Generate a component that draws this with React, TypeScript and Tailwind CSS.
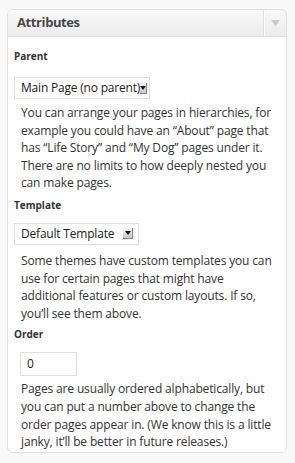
import React from 'react';

function SelectBox({ label, width }: { label: string; width: string }) {
  return (
    <div className={`flex items-center justify-between h-[22px] ${width} bg-white border border-[#dfdfdf] pl-[6px] pr-[5px]`}>
      <span className="text-[12px] tracking-[-0.2px] text-[#222] leading-none whitespace-nowrap">{label}</span>
      <span className="flex items-center justify-center w-[10px] h-[11px] bg-gradient-to-b from-[#f4f4f4] to-[#c9c9c9] border-r border-b border-[#888]">
        <svg width="6" height="4" viewBox="0 0 6 4">
          <path d="M0 0 L6 0 L3 4 Z" fill="#111" />
        </svg>
      </span>
    </div>
  );
}

function Help({ children, top }: { children: React.ReactNode; top: string }) {
  return <p className={`${top} pl-[7px] text-[12px] tracking-[-0.15px] leading-[17.6px] text-[#333]`}>{children}</p>;
}

function Label({ text, top }: { text: string; top: string }) {
  return <p className={`${top} text-[10px] leading-[14px] font-bold text-[#333]`}>{text}</p>;
}

export default function App() {
  return (
    <div className="w-[295px] h-[463px] bg-[#f9f9f9] pt-[9px] pl-[7px] font-['Open_Sans',Arial,sans-serif]">
      <div className="w-[280px] h-[444px] bg-white border border-[#dfdfdf] rounded-[6px] overflow-hidden">
        <div className="flex h-[27px] bg-gradient-to-b from-[#f9f9f9] to-[#ececec] border-b border-[#dfdfdf]">
          <h3 className="flex-1 pl-[9px] flex items-center text-[13px] tracking-[-0.4px] font-bold text-[#464646] [text-shadow:0_1px_0_#fff]">
            Attributes
          </h3>
          <div className="w-[22px] flex items-center justify-center border-l border-[#fff] shadow-[-1px_0_0_#dfdfdf]">
            <svg width="9" height="6" viewBox="0 0 9 6">
              <path d="M0 0 L9 0 L4.5 6 Z" fill="#c8c8c8" />
            </svg>
          </div>
        </div>

        <div className="pl-[6px] pr-[4px] pt-[12px]">
          <Label text="Parent" top="" />
          <div className="mt-[14px]">
            <SelectBox label="Main Page (no parent)" width="w-[136px]" />
          </div>
          <Help top="mt-[5px]">
            You can arrange your pages in hierarchies, for example you could have an “About” page that has “Life Story” and “My Dog” pages under it. There are no limits to how deeply nested you can make pages.
          </Help>

          <Label text="Template" top="mt-[6px]" />
          <div className="mt-[11px]">
            <SelectBox label="Default Template" width="w-[125px]" />
          </div>
          <Help top="mt-[7px]">
            Some themes have custom templates you can
            <br />
            use for certain pages that might have
            <br />
            additional features or custom layouts. If so,
            <br />
            you’ll see them above.
          </Help>

          <Label text="Order" top="mt-[5px]" />
          <div className="mt-[11px] px-[6px]">
            <div className="w-[57px] h-[24px] border border-[#dfdfdf] bg-white flex items-center pl-[6px] text-[12px] text-[#222]">0</div>
          </div>
          <Help top="mt-[4px]">
            Pages are usually ordered alphabetically, but you can put a number above to change the order pages appear in. (We know this is a little janky, it’ll be better in future releases.)
          </Help>
        </div>
      </div>
    </div>
  );
}
